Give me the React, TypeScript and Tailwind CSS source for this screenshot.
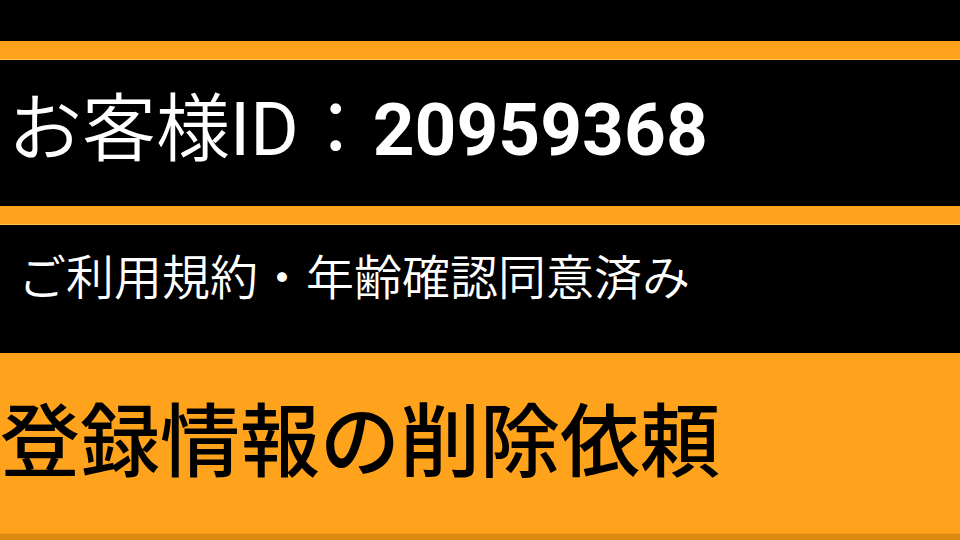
export default function App() {
  return (
    <div className="w-[960px] h-[540px] overflow-hidden bg-black flex flex-col" style={{ fontFamily: 'Roboto, "Noto Sans CJK JP", sans-serif' }}>
      <div className="h-[41px] shrink-0 bg-black" />
      <div className="h-[19px] shrink-0 bg-[#ffa31d] border-b border-[#ffc04f]" />
      <div className="h-[146px] shrink-0 bg-black flex items-center pl-[8px] pb-[6px]">
        <span className="text-white text-[74px] font-[350] leading-none whitespace-nowrap">
          お客様<span className="font-normal">ID</span>：<span className="font-bold text-[73px]">20959368</span>
        </span>
      </div>
      <div className="h-[19px] shrink-0 bg-[#ffa31d] border-b border-[#ffc04f]" />
      <div className="h-[128px] shrink-0 bg-black flex items-center pl-[18px] pb-[20px]">
        <span className="text-white text-[48px] font-[350] leading-none whitespace-nowrap">ご利用規約・年齢確認同意済み</span>
      </div>
      <div className="h-[180px] shrink-0 bg-[#ffa31d] flex items-center">
        <span className="text-black text-[80px] font-medium leading-none whitespace-nowrap">登録情報の削除依頼</span>
      </div>
      <div className="h-[7px] shrink-0 bg-[#dd8a12] border-t border-[#f29a18]" />
    </div>
  );
}
